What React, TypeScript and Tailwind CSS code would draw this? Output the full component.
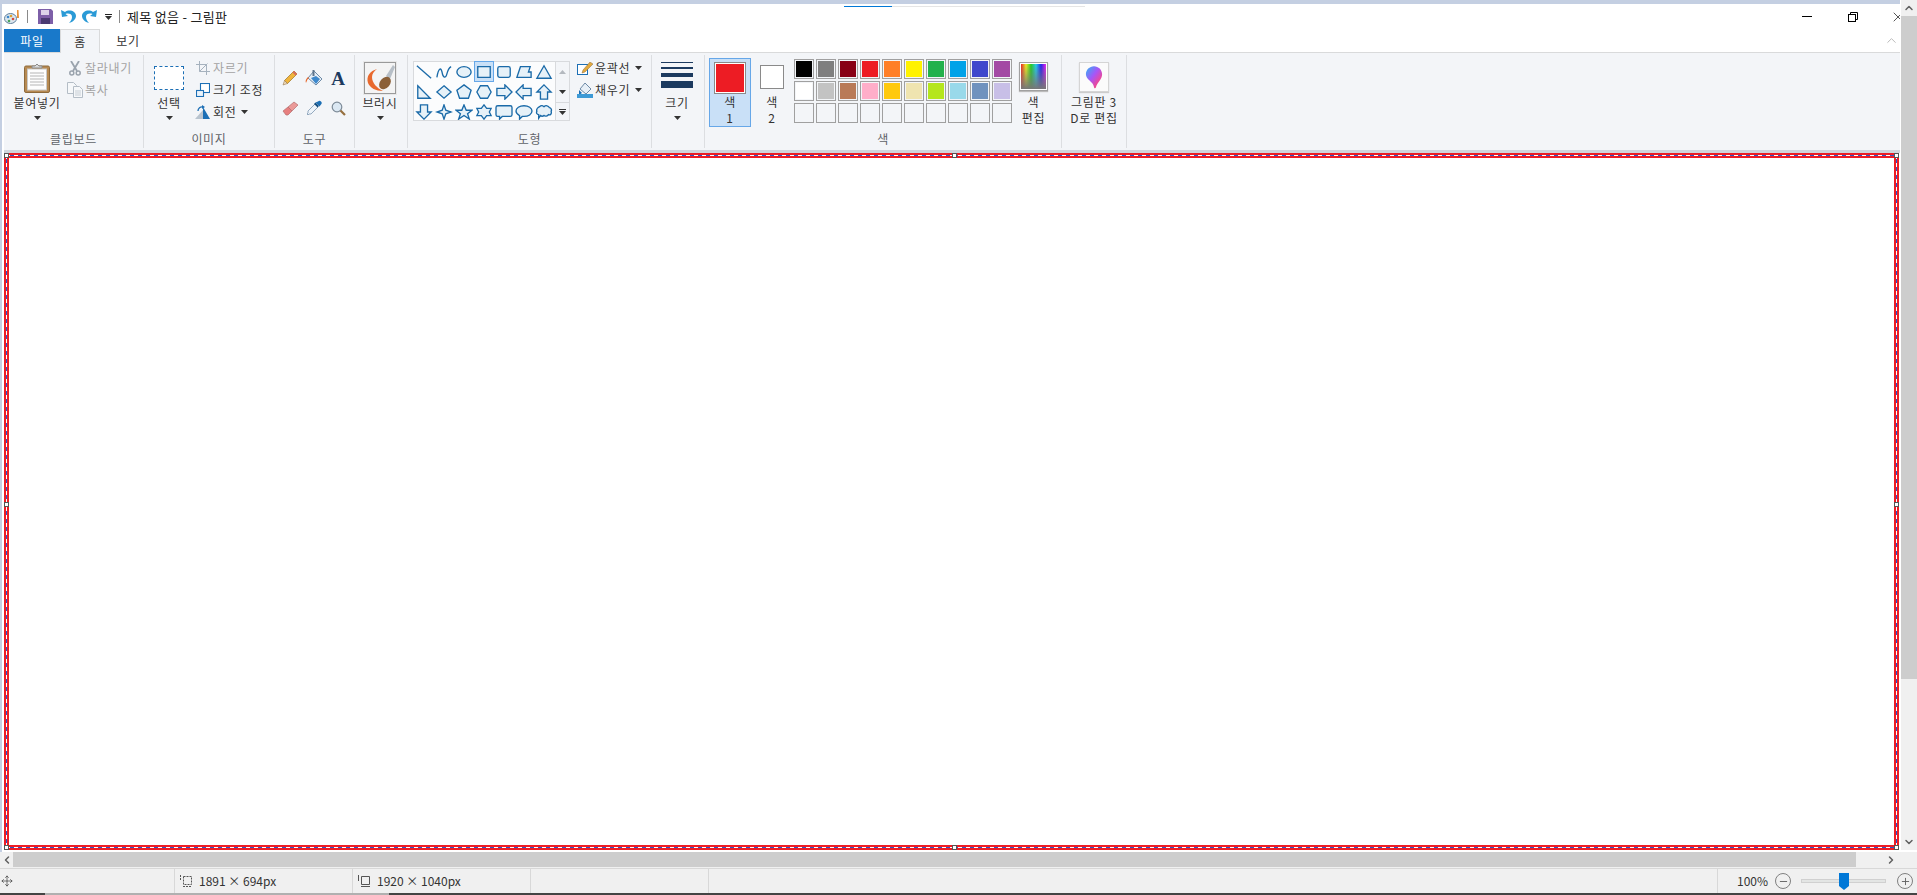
import React from 'react';
import { ChevronUp, ChevronDown, ChevronLeft, ChevronRight, Minus, Plus, X, Move } from 'lucide-react';

const row1 = ['#000000', '#7f7f7f', '#880015', '#ed1c24', '#ff7f27', '#fff200', '#22b14c', '#00a2e8', '#3f48cc', '#a349a4'];
const row2 = ['#ffffff', '#c3c3c3', '#b97a57', '#ffaec9', '#ffc90e', '#efe4b0', '#b5e61d', '#99d9ea', '#7092be', '#c8bfe7'];

const Caret = ({ className = '' }: { className?: string }) => (
  <svg width="7" height="4" viewBox="0 0 7 4" className={className}>
    <path d="M0 0h7L3.500 4z" fill="#333" />
  </svg>
);

const GroupLabel = ({ children }: { children: React.ReactNode }) => (
  <div className="absolute bottom-[3px] left-0 right-0 text-center text-[12px] leading-[16px] text-[#5f6368]">{children}</div>
);

// big button: icon on top, label and caret under it
const BigButton = ({ icon, label }: { icon: React.ReactNode; label: string }) => (
  <div className="flex flex-col items-center">
    <div className="flex items-center justify-center h-[35px]">{icon}</div>
    <div className="text-[12px] leading-[16px] text-[#333] whitespace-nowrap">{label}</div>
    <Caret className="mt-[5px]" />
  </div>
);

const PasteIcon = () => (
  <svg width="26" height="30" viewBox="0 0 26 30">
    <rect x="0.500" y="3" width="25" height="26.500" rx="1.500" fill="#b78a52" stroke="#8d6a3c" />
    <rect x="3.500" y="6" width="19" height="21" fill="#fdfdfd" stroke="#c9c9c9" />
    <path d="M6 10h14M6 13h14M6 16h14M6 19h14M6 22h14" stroke="#b5b5b5" />
    <path d="M8 5V3h3l2-2 2 2h3v2z" fill="#d8d8d8" stroke="#8a8a8a" />
  </svg>
);

const ScissorsIcon = () => (
  <svg width="12" height="15" viewBox="0 0 12 15">
    <path d="M2 0l6 10M10 0L4 10" stroke="#9aa3ad" strokeWidth="1.800" />
    <circle cx="2.800" cy="12" r="2" fill="none" stroke="#9aa3ad" strokeWidth="1.500" />
    <circle cx="9.200" cy="12" r="2" fill="none" stroke="#9aa3ad" strokeWidth="1.500" />
  </svg>
);

const CopyIcon = () => (
  <svg width="16" height="16" viewBox="0 0 16 16">
    <path d="M.5.500h6l3 3v8h-9z" fill="#f6f8fa" stroke="#b4bdc6" />
    <path d="M6.500 4.500h6l3 3v8h-9z" fill="#f6f8fa" stroke="#b4bdc6" />
    <path d="M8 9h6M8 11h6M8 13h6" stroke="#c7ced5" />
  </svg>
);

const CropIcon = () => (
  <svg width="14" height="14" viewBox="0 0 14 14" fill="none" stroke="#a6b2be">
    <path d="M3.500 0v10.500H14M0 3.500h10.500V14" />
    <path d="M3.500 10.500l8-8" />
  </svg>
);

const ResizeIcon = () => (
  <svg width="14" height="14" viewBox="0 0 14 14" fill="none" stroke="#1c6fb5" strokeWidth="1.100">
    <rect x="4.500" y="0.500" width="9" height="9" fill="#fff" />
    <rect x="0.500" y="7.500" width="7" height="6" fill="#eaf3fb" />
  </svg>
);

const RotateIcon = () => (
  <svg width="16" height="14" viewBox="0 0 16 14">
    <path d="M0 14L8 5v9z" fill="#b9c4cf" />
    <path d="M8 14V2l7 12z" fill="#1c6fb5" />
    <path d="M3 6a4 4 0 0 1 5-4" fill="none" stroke="#1c6fb5" strokeWidth="1.300" />
    <path d="M7 0l3 2-3 2z" fill="#1c6fb5" />
  </svg>
);

const PencilIcon = () => (
  <svg width="16" height="16" viewBox="0 0 16 16">
    <path d="M12 1l3 3-9.500 9.500-3-3z" fill="#f0b43c" stroke="#9c7425" strokeWidth="0.700" />
    <path d="M2.500 10.500l3 3L1 15z" fill="#ecd6b4" stroke="#8d6a3c" strokeWidth="0.500" />
    <path d="M12 1l3 3-1.500 1.500-3-3z" fill="#d96c5b" />
  </svg>
);

const FillIcon = () => (
  <svg width="18" height="17" viewBox="0 0 18 17">
    <path d="M9 1l8 8-6 6-8-7z" fill="#e7eff7" stroke="#6e8aa6" />
    <path d="M6 8l5-2 4 3-4 5z" fill="#3d88cc" />
    <path d="M3 7C1 9 0 11 1 13c1-2 1-4 3-5z" fill="#e8692d" />
    <rect x="7.500" y="0" width="2" height="6" fill="#5d748c" />
  </svg>
);

const EraserIcon = () => (
  <svg width="17" height="15" viewBox="0 0 17 15">
    <path d="M6 6l6-5 4 3-6 6z" fill="#eb9a99" stroke="#b56f6f" strokeWidth="0.700" />
    <path d="M1 10l5-4 4 4-4 4H4z" fill="#e77f7f" stroke="#b56f6f" strokeWidth="0.700" />
  </svg>
);

const PickerIcon = () => (
  <svg width="16" height="16" viewBox="0 0 16 16">
    <path d="M9 4l3 3-7 7H3l-1 1-1-1 1-1v-2z" fill="#eef4fa" stroke="#7b96b0" strokeWidth="0.800" />
    <path d="M9.500 2.500l4 4 1.500-2a2 2 0 0 0-3-3z" fill="#1c6fb5" />
    <rect x="8" y="4" width="5" height="2" transform="rotate(45 10.500 5)" fill="#164f80" />
  </svg>
);

const ZoomIcon = () => (
  <svg width="15" height="15" viewBox="0 0 15 15">
    <circle cx="6" cy="6" r="4.800" fill="#dbe8f3" stroke="#7d8b98" strokeWidth="1.200" />
    <path d="M9.500 9.500L14 14" stroke="#96703f" strokeWidth="2.200" />
  </svg>
);

const BrushIcon = () => (
  <div className="w-[32px] h-[32px] bg-[#f4f4f4] border border-[#9a9a9a] shadow-[0_0_0_1px_#e8e8e8]">
    <svg width="30" height="30" viewBox="0 0 30 30">
      <path d="M12 6C5 8 1 13 3 20c2 5 8 8 15 8-6-3-11-8-11-14 0-3 2-6 5-8z" fill="#e8692d" />
      <path d="M21 13L28 2l2 2-5 12z" fill="#b7bfc7" />
      <ellipse cx="20" cy="20" rx="7" ry="5" transform="rotate(-50 20 20)" fill="#8b6038" />
    </svg>
  </div>
);

const stroke = '#1a6aa8';
const shade = '#e6f1f8';
// gallery shapes, one path per cell on a 20x18 box
const shapes = [
  { d: 'M2 2L18 16', open: true },
  { d: 'M2 15C4 3 7 4 8 10s4 6 5 2 3-8 5-9', open: true },
  { d: 'M2 9a8 6 0 1 0 16 0a8 6 0 1 0-16 0z' },
  { d: 'M3 3h14v12H3z', selected: true },
  { d: 'M5 3h10a2 2 0 0 1 2 2v8a2 2 0 0 1-2 2H5a2 2 0 0 1-2-2V5a2 2 0 0 1 2-2z' },
  { d: 'M6 3h11l-2 6h3v6H2z' },
  { d: 'M10 2l8 14H2z' },
  { d: 'M3 2l14 14H3z' },
  { d: 'M10 2l8 7-8 7-8-7z' },
  { d: 'M10 1l8 6-3 9H5L2 7z' },
  { d: 'M6 2h8l4 7-4 7H6L2 9z' },
  { d: 'M2 5h9V1l8 8-8 8v-4H2z' },
  { d: 'M18 5H9V1L1 9l8 8v-4h9z' },
  { d: 'M10 1l8 8h-4v8H6V9H2z' },
  { d: 'M6 1h8v8h4l-8 8-8-8h4z' },
  { d: 'M10 1l2 6 6 2-6 2-2 6-2-6-6-2 6-2z' },
  { d: 'M10 1l2.500 6H19l-5 4 2 6-6-4-6 4 2-6-5-4h6.500z' },
  { d: 'M10 1l3 4h5l-2 4 2 4h-5l-3 4-3-4H2l2-4-2-4h5z' },
  { d: 'M3 2h14a2 2 0 0 1 2 2v8a2 2 0 0 1-2 2h-9l-3 3v-3H3a2 2 0 0 1-2-2V4a2 2 0 0 1 2-2z' },
  { d: 'M10 2c5 0 9 2.500 9 6s-4 6-9 6H8l-3 3v-4C3 12 1 10 1 8c0-3.500 4-6 9-6z' },
  { d: 'M5 3c2-2 4-1 5 0 2-2 5-1 6 1 2 0 3 3 2 4 1 3-1 5-3 4-1 2-4 2-5 1-1 1-3 1-4 0l-2 3v-4c-2 0-3-2-2-4-1-2 1-4 3-5z' },
];

const ShapeGallery = () => (
  <div className="flex h-[60px] w-[157px] border border-[#d8dadd] bg-[#fbfcfd]">
    <div className="grid grid-cols-[repeat(7,20px)] grid-rows-[repeat(3,20px)] w-[142px] border-r border-[#d8dadd]">
      {shapes.map((s, i) => (
        <div key={i} className={s.selected ? 'flex items-center justify-center bg-[#c9e0f7] border border-[#66a7e8] -mt-px' : 'flex items-center justify-center'}>
          <svg width="18" height="16" viewBox="0 0 20 18" className="shrink-0">
            <path d={s.d} fill={s.open ? 'none' : shade} stroke={stroke} strokeWidth="1.500" />
          </svg>
        </div>
      ))}
    </div>
    <div className="flex flex-1 flex-col items-center bg-[#f3f5f8]">
      <div className="flex h-[20px] items-center"><svg width="7" height="4" viewBox="0 0 7 4"><path d="M3.500 0L7 4H0z" fill="#b4b9bf" /></svg></div>
      <div className="flex h-[20px] items-center"><Caret /></div>
      <div className="flex h-[18px] flex-col items-center justify-center gap-px border-t border-[#d8dadd] w-full">
        <div className="w-[7px] h-px bg-[#333]" />
        <Caret />
      </div>
    </div>
  </div>
);

const SmallAction = ({ icon, label, muted, caret }: { icon: React.ReactNode; label: string; muted?: boolean; caret?: boolean }) => (
  <div className="flex items-center h-[22px]">
    <div className="flex w-[17px] justify-center">{icon}</div>
    <div className={muted ? 'ml-[2px] text-[12px] text-[#a3a3a3] whitespace-nowrap' : 'ml-[2px] text-[12px] text-[#333] whitespace-nowrap'}>{label}</div>
    {caret && <Caret className="ml-[5px]" />}
  </div>
);

const Swatch = ({ color }: { color?: string }) => (
  <div className="w-[20px] h-[20px] border border-[#a0a0a0] p-px">
    <div className="w-full h-full" style={{ backgroundColor: color ?? '#f3f5f8' }} />
  </div>
);

const Divider = () => <div className="w-px bg-[#dcdee1] my-[2px]" />;

const Handle = ({ className }: { className: string }) => (
  <div className={`absolute w-[5px] h-[5px] bg-white border border-[#555] ${className}`} />
);

export default function App() {
  return (
    <div className="flex flex-col h-[895px] w-[1917px] overflow-hidden bg-white font-['Noto_Sans_CJK_KR','Noto_Sans',sans-serif] tracking-[0.7px]">
      <div className="flex h-[852px]">
        <div className="flex-1 min-w-0 flex flex-col overflow-hidden">
          <div className="h-[4px] bg-[#c4cfe2]" />
          <div className="flex flex-1 min-h-0">
            <div className="w-[2px] bg-[#c4cfe2]" />
            <div className="w-[2px] bg-white" />
            <div className="flex-1 min-w-0 flex flex-col">
              {/* title bar */}
              <div className="relative flex h-[25px] items-center">
                <div className="absolute top-[2px] left-[840px] flex h-px">
                  <div className="w-[48px] bg-[#0078d7]" />
                  <div className="w-[193px] bg-[#e5e5e5]" />
                </div>
                <svg width="16" height="16" viewBox="0 0 16 16">
                  <ellipse cx="6.500" cy="9.500" rx="6" ry="5" fill="#dbe6ef" stroke="#5f7f9c" />
                  <circle cx="4" cy="8" r="1.300" fill="#3d88cc" />
                  <circle cx="7" cy="7" r="1.300" fill="#e0a030" />
                  <circle cx="9" cy="10" r="1.300" fill="#d24b3d" />
                  <circle cx="5" cy="12" r="1.300" fill="#4aa35c" />
                  <path d="M13 1l1.500 0 .5 8h-2z" fill="#e8923a" />
                </svg>
                <div className="ml-[7px] h-[13px] w-px bg-[#8a8a8a]" />
                <svg width="15" height="15" viewBox="0 0 15 15" className="ml-[10px]">
                  <path d="M0 0h13l2 2v13H0z" fill="#7d5fa8" />
                  <rect x="3" y="1" width="8" height="5" fill="#dcd3ea" />
                  <rect x="3" y="9" width="9" height="6" fill="#4a3a72" />
                </svg>
                <svg width="15" height="15" viewBox="0 0 15 15" className="ml-[8px]">
                  <path d="M0 1l1 7 6-1-2.500-2C7 4 11 4.500 11 8c0 2-1 4-3 6 4-1 7-4 7-7 0-5-7-7-11-4z" fill="#2a9ad6" />
                </svg>
                <svg width="15" height="15" viewBox="0 0 15 15" className="ml-[6px]">
                  <path d="M15 1l-1 7-6-1 2.500-2C8 4 4 4.500 4 8c0 2 1 4 3 6-4-1-7-4-7-7 0-5 7-7 11-4z" fill="#2a9ad6" />
                </svg>
                <div className="ml-[8px] flex flex-col items-center gap-[1px]">
                  <div className="w-[7px] h-px bg-[#222]" />
                  <Caret />
                </div>
                <div className="ml-[7px] h-[13px] w-px bg-[#8a8a8a]" />
                <div className="ml-[7px] text-[13px] tracking-[0.3px] text-[#222] whitespace-nowrap">제목 없음 - 그림판</div>
                <div className="ml-auto flex items-center">
                  <div className="w-[10px] h-px bg-black mr-[36px]" />
                  <svg width="10" height="10" viewBox="0 0 10 10" fill="none" stroke="#000" className="mr-[32px]">
                    <rect x="0.500" y="2.500" width="7" height="7" />
                    <path d="M2.500 2.500V.5h7v7H7.500" />
                  </svg>
                  <X size={16} strokeWidth={1} className="text-black -mr-[6px]" />
                </div>
              </div>
              {/* tabs */}
              <div className="flex h-[24px] items-stretch text-[12px] border-b border-[#d9dadb]">
                <div className="w-[56px] flex items-center justify-center bg-[#1979ca] text-white">파일</div>
                <div className="w-[40px] flex items-center justify-center bg-[#f3f5f8] border border-b-0 border-[#d9dadb] h-[24px] text-[#333]">홈</div>
                <div className="w-[56px] flex items-center justify-center text-[#333]">보기</div>
                <ChevronUp size={15} strokeWidth={1.500} className="ml-auto mr-[1px] mt-[4px] text-[#b5b5b5]" />
              </div>
              {/* ribbon */}
              <div className="flex h-[100px] bg-[#f3f5f8] border-b-[3px] border-[#d0d5dc]">
                <div className="relative w-[139px] flex pl-[6px] pt-[7px]">
                  <div className="w-[54px]"><BigButton icon={<PasteIcon />} label="붙여넣기" /></div>
                  <div className="ml-[2px] flex flex-col -mt-[3px]">
                    <SmallAction icon={<ScissorsIcon />} label="잘라내기" muted />
                    <SmallAction icon={<CopyIcon />} label="복사" muted />
                  </div>
                  <GroupLabel>클립보드</GroupLabel>
                </div>
                <Divider />
                <div className="relative w-[130px] flex pl-[10px] pt-[7px]">
                  <div className="w-[30px]"><BigButton icon={<div className="w-[30px] h-[24px] border border-dashed border-[#1c6fb5] bg-white" />} label="선택" /></div>
                  <div className="ml-[10px] flex flex-col -mt-[3px]">
                    <SmallAction icon={<CropIcon />} label="자르기" muted />
                    <SmallAction icon={<ResizeIcon />} label="크기 조정" />
                    <SmallAction icon={<RotateIcon />} label="회전" caret />
                  </div>
                  <GroupLabel>이미지</GroupLabel>
                </div>
                <Divider />
                <div className="relative w-[79px] pl-[3px] pt-[10px]">
                  <div className="grid grid-cols-[repeat(3,24px)] grid-rows-[repeat(2,30px)] place-items-center">
                    <PencilIcon />
                    <FillIcon />
                    <div className="font-['Liberation_Serif',serif] font-bold text-[19px] leading-none tracking-normal text-[#1c3a5f]">A</div>
                    <EraserIcon />
                    <PickerIcon />
                    <ZoomIcon />
                  </div>
                  <GroupLabel>도구</GroupLabel>
                </div>
                <Divider />
                <div className="relative w-[52px] pt-[7px] pr-[2px]">
                  <BigButton icon={<BrushIcon />} label="브러시" />
                </div>
                <Divider />
                <div className="relative w-[243px] flex pl-[5px] pt-[8px]">
                  <ShapeGallery />
                  <div className="ml-[6px] flex flex-col -mt-[4px]">
                    <SmallAction
                      icon={
                        <svg width="16" height="13" viewBox="0 0 16 13">
                          <rect x="0.500" y="2.500" width="10" height="10" fill="#fff" stroke="#1c6fb5" />
                          <path d="M13 0l3 2-8 8-3 1 1-3z" fill="#e3a93c" stroke="#8d6a3c" strokeWidth="0.500" />
                        </svg>
                      }
                      label="윤곽선"
                      caret
                    />
                    <SmallAction
                      icon={
                        <svg width="16" height="16" viewBox="0 0 16 16">
                          <path d="M8 1l6 6-5 5-6-5z" fill="#e7eff7" stroke="#6e8aa6" />
                          <path d="M2 8l3 3-3 2z" fill="#1c6fb5" />
                          <rect x="0" y="12" width="16" height="4" fill="#3d9ad6" />
                        </svg>
                      }
                      label="채우기"
                      caret
                    />
                  </div>
                  <GroupLabel>도형</GroupLabel>
                </div>
                <Divider />
                <div className="relative w-[52px] pt-[7px] pr-[2px]">
                  <BigButton
                    icon={
                      <div className="flex flex-col w-[32px] gap-[4px] mb-[5px]">
                        <div className="h-px bg-[#1c3a5f]" />
                        <div className="h-[2px] bg-[#1c3a5f]" />
                        <div className="h-[4px] bg-[#1c3a5f]" />
                        <div className="h-[7px] bg-[#1c3a5f]" />
                      </div>
                    }
                    label="크기"
                  />
                </div>
                <Divider />
                <div className="relative w-[356px] flex pl-[4px] pt-[5px]">
                  <div className="w-[42px] h-[69px] bg-[#c9e0f7] border border-[#66a7e8] flex flex-col items-center pt-[3px]">
                    <div className="w-[32px] h-[32px] border border-[#8a8a8a] p-px bg-white">
                      <div className="w-full h-full bg-[#ed1c24]" />
                    </div>
                    <div className="text-[12px] leading-[16px] text-[#333]">색</div>
                    <div className="text-[12px] leading-[16px] text-[#333]">1</div>
                  </div>
                  <div className="w-[42px] h-[69px] flex flex-col items-center pt-[7px]">
                    <div className="w-[24px] h-[24px] border border-[#8a8a8a] bg-white" />
                    <div className="mt-[5px] text-[12px] leading-[16px] text-[#333]">색</div>
                    <div className="text-[12px] leading-[16px] text-[#333]">2</div>
                  </div>
                  <div className="ml-[1px] grid grid-cols-[repeat(10,20px)] grid-rows-[repeat(3,20px)] gap-[2px] h-fit pt-[1px]">
                    {row1.map((c) => <Swatch key={c} color={c} />)}
                    {row2.map((c) => <Swatch key={c} color={c} />)}
                    {Array.from({ length: 10 }).map((_, i) => <Swatch key={i} />)}
                  </div>
                  <div className="ml-[7px] w-[29px] flex flex-col items-center pt-[4px]">
                    <div className="w-[29px] h-[29px] border border-[#a0a0a0] p-[1px] bg-white shadow-[0_1px_1px_#bbb]">
                      <div className="w-full h-full bg-[linear-gradient(to_bottom,transparent,#777),linear-gradient(to_right,#e22,#ee2,#2c2,#2ce,#22e,#e2e)]" />
                    </div>
                    <div className="mt-[3px] text-[12px] leading-[16px] text-[#333] whitespace-nowrap text-center">색<br />편집</div>
                  </div>
                  <GroupLabel>색</GroupLabel>
                </div>
                <Divider />
                <div className="w-[64px] flex flex-col items-center pt-[9px]">
                  <div className="w-[30px] h-[30px] bg-[#fbfbfb] border border-[#d5d5d5] shadow-[0_1px_1px_#ccc] flex items-center justify-center">
                    <svg width="18" height="24" viewBox="0 0 20 26">
                      <defs>
                        <linearGradient id="p3d" x1="0" y1="0" x2="1" y2="1">
                          <stop offset="0" stopColor="#29b6f6" />
                          <stop offset="0.450" stopColor="#a855f7" />
                          <stop offset="0.750" stopColor="#ec4899" />
                          <stop offset="1" stopColor="#f59e0b" />
                        </linearGradient>
                      </defs>
                      <path d="M10 1c5 0 9 4 9 9 0 6-5 8-7 15-1 1-2 0-2-1C9 18 1 16 1 10c0-5 4-9 9-9z" fill="url(#p3d)" />
                    </svg>
                  </div>
                  <div className="mt-[2px] text-[12px] leading-[16px] text-[#333] text-center whitespace-nowrap">그림판 3<br />D로 편집</div>
                </div>
                <Divider />
              </div>
              {/* canvas */}
              <div className="flex-1 min-h-0 bg-white">
                <div className="relative h-[697px] mr-[1px] border-[5px] border-[#ed1c24] bg-white">
                  <div className="absolute -top-[3px] -left-[3px] -right-[3px] h-px bg-[repeating-linear-gradient(to_right,#fff_0_4px,#2d55c8_4px_8px)]" />
                  <div className="absolute -bottom-[3px] -left-[3px] -right-[3px] h-px bg-[repeating-linear-gradient(to_right,#fff_0_4px,#2d55c8_4px_8px)]" />
                  <div className="absolute -top-[3px] -bottom-[3px] -left-[3px] w-px bg-[repeating-linear-gradient(to_bottom,#fff_0_4px,#2d55c8_4px_8px)]" />
                  <div className="absolute -top-[3px] -bottom-[3px] -right-[3px] w-px bg-[repeating-linear-gradient(to_bottom,#fff_0_4px,#2d55c8_4px_8px)]" />
                  <Handle className="-top-[5px] -left-[5px]" />
                  <Handle className="-top-[5px] left-1/2" />
                  <Handle className="-top-[5px] -right-[5px]" />
                  <Handle className="top-1/2 -left-[5px]" />
                  <Handle className="top-1/2 -right-[5px]" />
                  <Handle className="-bottom-[5px] -left-[5px]" />
                  <Handle className="-bottom-[5px] left-1/2" />
                  <Handle className="-bottom-[5px] -right-[5px]" />
                </div>
              </div>
            </div>
          </div>
        </div>
        {/* vertical scrollbar */}
        <div className="w-[17px] border-l border-white flex flex-col bg-[#f0f0f0] mb-[2px]">
          <div className="h-[16px] flex items-center justify-center"><ChevronUp size={12} strokeWidth={3} className="text-[#606060]" /></div>
          <div className="h-[663px] bg-[#cdcdcd]" />
          <div className="flex-1" />
          <div className="h-[16px] flex items-center justify-center"><ChevronDown size={12} strokeWidth={3} className="text-[#606060]" /></div>
        </div>
      </div>
      {/* horizontal scrollbar */}
      <div className="flex h-[16px] bg-[#f0f0f0] items-start">
        <div className="w-[13px] h-[15px] flex items-center justify-center"><ChevronLeft size={12} strokeWidth={3} className="text-[#606060]" /></div>
        <div className="w-[1843px] h-[15px] bg-[#cdcdcd]" />
        <div className="w-[43px] h-[15px] flex items-center justify-end pr-[2px]"><ChevronRight size={12} strokeWidth={3} className="text-[#606060]" /></div>
      </div>
      {/* status bar */}
      <div className="flex h-[25px] bg-[#f0f0f0] border-t border-[#d8d8d8] text-[12px] tracking-normal text-[#333] items-center">
        <div className="w-[175px] h-full border-r border-[#d8d8d8] flex items-center pl-[1px]"><Move size={12} strokeWidth={1.300} /></div>
        <div className="w-[178px] h-full border-r border-[#d8d8d8] flex items-center pl-[5px] gap-[7px]">
          <svg width="12" height="12" viewBox="0 0 12 12" fill="none" stroke="#555"><path d="M.5 0v6M3.500 1.500h8v8h-8zM3 11.500h9" strokeDasharray="2 1" /></svg>
          1891 × 694px
        </div>
        <div className="w-[178px] h-full border-r border-[#d8d8d8] flex items-center pl-[5px] gap-[7px]">
          <svg width="12" height="12" viewBox="0 0 12 12" fill="none" stroke="#555"><path d="M.5 0v6M3.500 1.500h8v8h-8zM3 11.500h9" /></svg>
          1920 × 1040px
        </div>
        <div className="w-[178px] h-full border-r border-[#d8d8d8]" />
        <div className="w-[1009px] h-full border-r border-[#d8d8d8]" />
        <div className="flex-1 flex items-center pl-[19px]">
          <span>100%</span>
          <div className="ml-[7px] w-[16px] h-[16px] rounded-full border border-[#808080] flex items-center justify-center"><Minus size={11} strokeWidth={2} className="text-[#606060]" /></div>
          <div className="relative ml-[10px] w-[85px] h-[4px] bg-[#e3e5e4] border border-[#d0d0d0]">
            <svg width="10" height="17" viewBox="0 0 10 17" className="absolute -top-[7px] left-[37px]">
              <path d="M0 0h10v13l-5 4-5-4z" fill="#0078d7" />
            </svg>
          </div>
          <div className="ml-[11px] w-[16px] h-[16px] rounded-full border border-[#808080] flex items-center justify-center"><Plus size={11} strokeWidth={2} className="text-[#606060]" /></div>
        </div>
      </div>
      <div className="flex h-[2px] bg-[#b0b0b0]">
        <div className="w-[45px] bg-[#444]" />
        <div className="ml-[344px] flex-1 bg-[#444]" />
      </div>
    </div>
  );
}
